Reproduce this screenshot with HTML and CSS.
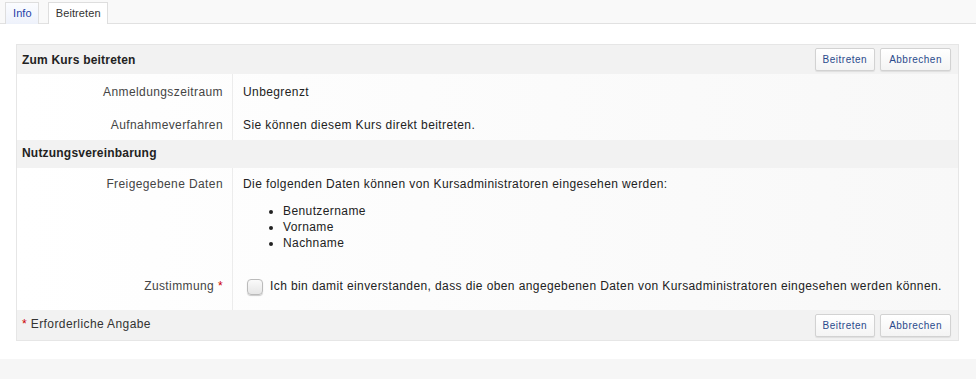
FILE: index.html
```html
<!DOCTYPE html>
<html lang="de">
<head>
    <meta charset="UTF-8">
    <title>Zum Kurs beitreten</title>
    <link rel="stylesheet" href="styles.css">
</head>
<body>
    <div class="page">
        <div class="tabs">
            <a class="tab" href="#">Info</a>
            <a class="tab active" href="#">Beitreten</a>
        </div>
        <div class="content">
            <form class="form">
                <div class="form-head">
                    <h2>Zum Kurs beitreten</h2>
                    <div class="buttons">
                        <button type="button" class="btn">Beitreten</button>
                        <button type="button" class="btn">Abbrechen</button>
                    </div>
                </div>
                <div class="row">
                    <div class="label">Anmeldungszeitraum</div>
                    <div class="value">Unbegrenzt</div>
                </div>
                <div class="row">
                    <div class="label">Aufnahmeverfahren</div>
                    <div class="value">Sie können diesem Kurs direkt beitreten.</div>
                </div>
                <div class="section">Nutzungsvereinbarung</div>
                <div class="row row-tall">
                    <div class="label">Freigegebene Daten</div>
                    <div class="value">
                        <p>Die folgenden Daten können von Kursadministratoren eingesehen werden:</p>
                        <ul>
                            <li>Benutzername</li>
                            <li>Vorname</li>
                            <li>Nachname</li>
                        </ul>
                    </div>
                </div>
                <div class="row row-check">
                    <div class="label">Zustimmung <span class="req">*</span></div>
                    <div class="value">
                        <label class="check"><span class="box"></span>Ich bin damit einverstanden, dass die oben angegebenen Daten von Kursadministratoren eingesehen werden können.</label>
                    </div>
                </div>
                <div class="form-foot">
                    <div class="note"><span class="req">*</span> Erforderliche Angabe</div>
                    <div class="buttons">
                        <button type="button" class="btn">Beitreten</button>
                        <button type="button" class="btn">Abbrechen</button>
                    </div>
                </div>
            </form>
        </div>
    </div>
</body>
</html>
```

FILE: styles.css
```css
* { box-sizing: border-box; margin: 0; padding: 0; }
body { font-family: "Liberation Sans", Arial, sans-serif; font-size: 12px; letter-spacing: 0.4px; color: #222; background: #f6f6f6; }
.page { display: flex; flex-direction: column; }
.tabs { display: flex; gap: 9px; height: 24px; padding: 2px 0 0 5px; background: #f9f9f9; border-bottom: 1px solid #e2e2e2; }
.tab { display: block; height: 22px; padding: 4px 6px 0 7px; border: 1px solid #dedede; border-bottom: none; color: #1f3fa8; text-decoration: none; font-size: 11px; letter-spacing: 0.1px; background: linear-gradient(#fbfcff, #eef2fb); }
.tab.active { color: #333; background: #fff; padding: 4px 6px 0 7px; }
.content { background: #fff; padding: 20px 17px 18px 16px; box-shadow: 0 2px 3px rgba(0, 0, 0, 0.12); }
.form { border: 1px solid #e6e6e6; }
.form-head, .form-foot { display: flex; justify-content: space-between; align-items: center; background: #f2f2f2; padding: 0 7px 0 5px; }
.form-head { height: 29px; }
.form-foot { height: 30px; }
h2 { font-size: 12px; font-weight: bold; letter-spacing: 0.2px; }
.buttons { display: flex; gap: 5px; }
.btn { font-family: inherit; font-size: 10px; letter-spacing: 0.5px; color: #2a4a8c; height: 23px; padding: 0 8px; background: linear-gradient(#fff, #f4f4f4); border: 1px solid #d2d2d2; border-radius: 2px; box-shadow: 0 1px 1px rgba(0, 0, 0, 0.08); }
.btn:first-child { padding: 0 7px; }
.row { display: flex; min-height: 33px; line-height: 16px; background: linear-gradient(to right, #fff, #f8f8f8); }
.label { width: 216px; flex-shrink: 0; text-align: right; padding: 10px 9px 0 0; color: #444; border-right: 1px solid #ececec; }
.value { flex: 1; padding: 10px 10px 0; }
.row-tall { min-height: 98px; }
.row-tall .label, .row-tall .value { padding-top: 8px; }
.row-tall ul { margin: 11px 0 0 40px; }
.row-check { min-height: 44px; }
.row-check .label { padding-top: 12px; }
.row-check .value { padding-top: 9px; }
.check { display: flex; align-items: flex-start; gap: 7px; margin-left: 4px; padding-top: 3px; }
.box { width: 16px; height: 16px; flex-shrink: 0; margin-top: 1px; border: 1px solid #bbb; border-radius: 4px; background: linear-gradient(#fafafa, #e6e6e6); box-shadow: 0 1px 1px rgba(0, 0, 0, 0.2); }
.section { height: 28px; padding: 6px 5px 0; font-weight: bold; letter-spacing: 0.2px; background: #f2f2f2; }
.req { color: #c00; }
.note { color: #333; margin-top: -3px; }
```
